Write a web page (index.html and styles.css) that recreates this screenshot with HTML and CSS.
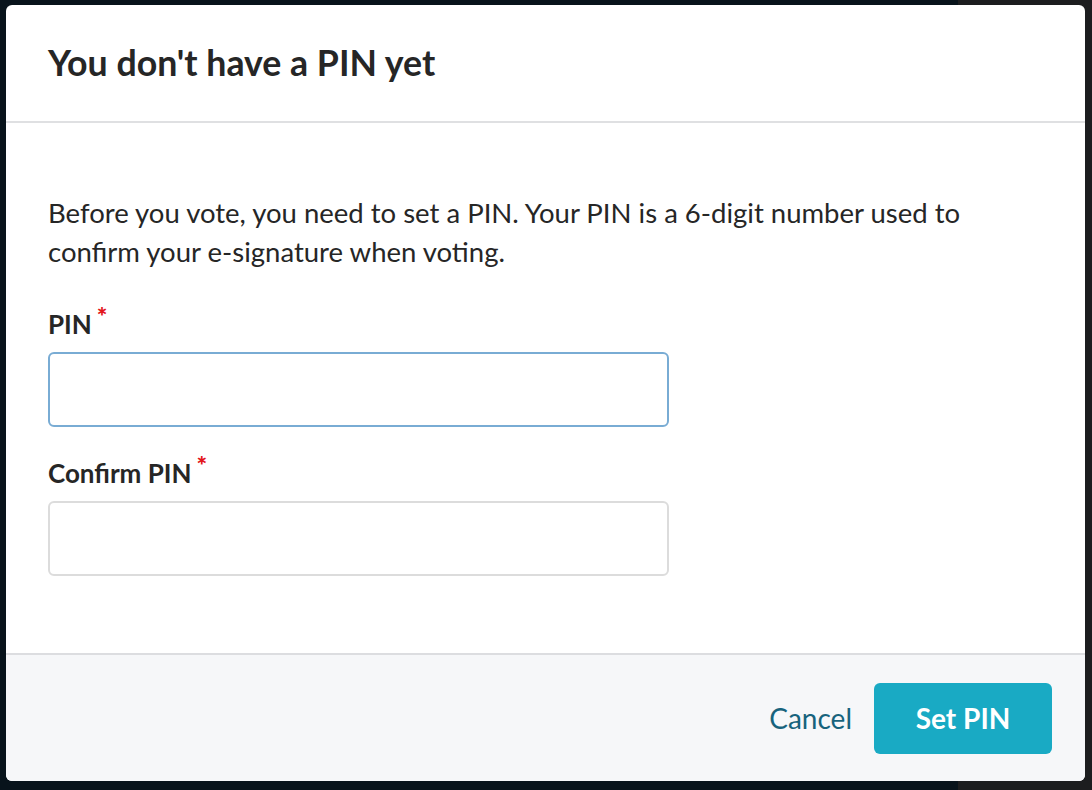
FILE: index.html
```html
<!DOCTYPE html>
<html>
<head>
<meta charset="utf-8">
<link rel="stylesheet" href="styles.css">
</head>
<body>
<div class="backdrop">
  <div class="modal">
    <div class="modal-header">
      <h1 class="title">You don't have a PIN yet</h1>
    </div>
    <div class="modal-body">
      <p class="intro">Before you vote, you need to set a PIN. Your PIN is a 6-digit number used to confirm your e-signature when voting.</p>
      <div class="field">
        <label class="label">PIN<span class="req">*</span></label>
        <input class="input input-focus" type="password">
      </div>
      <div class="field">
        <label class="label">Confirm PIN<span class="req">*</span></label>
        <input class="input" type="password">
      </div>
    </div>
    <div class="modal-footer">
      <button class="btn-link">Cancel</button>
      <button class="btn-primary">Set PIN</button>
    </div>
  </div>
</div>
</body>
</html>
```

FILE: styles.css
```css
html, body {
  margin: 0;
  padding: 0;
  height: 100%;
}
body {
  background: #08131b;
  font-family: Lato, "Open Sans", sans-serif;
  color: #262626;
}
.backdrop {
  padding: 5px 7px 9px 6px;
  height: 790px;
  box-sizing: border-box;
  background: linear-gradient(to right, #08131b 0, #08131b 958px, #1c1d1f 958px);
}
.modal {
  width: 1079px;
  height: 776px;
  background: #ffffff;
  border-radius: 6px;
  overflow: hidden;
  display: flex;
  flex-direction: column;
}
.modal-header {
  padding: 39px 42px 39px;
  border-bottom: 2px solid #dfe0e2;
}
.title {
  margin: 0;
  font-size: 35.7px;
  line-height: 38px;
  font-weight: 700;
  color: #262626;
}
.modal-body {
  flex: 1;
  padding: 70px 42px 0;
}
.intro {
  margin: 0 0 38px;
  font-size: 27.5px;
  line-height: 39px;
  color: #262626;
}
.field {
  display: flex;
  flex-direction: column;
  margin-bottom: 31px;
}
.label {
  display: block;
  height: 30px;
  font-size: 26px;
  line-height: 30px;
  font-weight: 700;
  margin-bottom: 13px;
  color: #262626;
}
.req {
  color: #e3161b;
  font-size: 25px;
  line-height: 0;
  font-weight: 900;
  position: relative;
  top: -8px;
  margin-left: 5px;
}
.input {
  display: block;
  width: 621px;
  height: 75px;
  box-sizing: border-box;
  border: 2px solid #dcdcdc;
  border-radius: 6px;
  background: #fff;
  font-size: 22px;
  padding: 0 14px;
  margin: 0;
  outline: none;
}
.input-focus {
  border-color: #79acd4;
}
.modal-footer {
  border-top: 2px solid #dcdde0;
  background: #f6f7f9;
  height: 128px;
  box-sizing: border-box;
  display: flex;
  align-items: center;
  justify-content: flex-end;
  padding: 0 33px 0 0;
  gap: 22px;
}
.btn-link {
  background: none;
  border: none;
  font-family: Lato, sans-serif;
  font-size: 28px;
  color: #17637d;
  padding: 0;
  cursor: pointer;
}
.btn-primary {
  width: 178px;
  height: 71px;
  background: #19aac4;
  border: none;
  border-radius: 6px;
  color: #fff;
  font-family: Lato, sans-serif;
  font-size: 28px;
  font-weight: 700;
  cursor: pointer;
}
```
